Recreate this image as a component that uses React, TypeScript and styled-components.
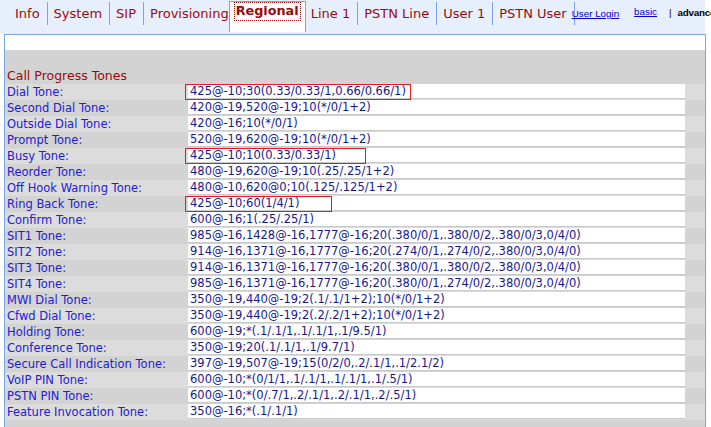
import React from "react";
import styled, { createGlobalStyle } from "styled-components";

const GlobalStyle = createGlobalStyle`
    html, body {
        margin: 0;
        padding: 0;
        background: #ffffff;
        overflow: hidden;
    }
    body {
        font-family: "DejaVu Sans", Verdana, sans-serif;
    }
`;

const Page = styled.div`
    width: 711px;
    height: 427px;
    overflow: hidden;
`;

const TopBar = styled.div`
    width: 705px;
    height: 34px;
    background: #e8effc;
    display: flex;
    align-items: flex-start;
    padding-left: 9px;
    box-sizing: border-box;
    white-space: nowrap;
`;

const TabList = styled.nav`
    display: flex;
    align-items: flex-start;
    padding-top: 2px;
`;

const Tab = styled.div<{ $first?: boolean; $afterActive?: boolean }>`
    height: 23px;
    line-height: 24px;
    padding: 0 7px 0 6px;
    font-size: 13px;
    color: #9c0a0a;
    border-left: ${(p) => (p.$first || p.$afterActive ? "none" : "1px solid #7ba4e8")};
    ${(p) => p.$afterActive && "padding-left: 5px;"}
`;

const ActiveTab = styled.div`
    margin: -1px 0 0 -7px;
    height: 29px;
    padding: 1px 5px 0 5px;
    background: #ffffff;
    border: 1px solid #7ba4e8;
    border-bottom: none;
    font-size: 12.8px;
    font-weight: bold;
    color: #9c0a0a;
`;

const FocusLabel = styled.span`
    display: inline-block;
    line-height: 16px;
    padding: 0 1px 1px 1px;
    outline: 1px dotted #9c0a0a;
`;

const LoginLink = styled.div`
    border-left: 1px solid #7ba4e8;
    height: 23px;
`;

const SmallLink = styled.a`
    font-family: "Liberation Sans", Arial, sans-serif;
    font-size: 9.8px;
    color: #0000d0;
    text-decoration: underline;
    line-height: 20px;
    display: inline-block;
`;

const LoginText = styled(SmallLink)`
    margin-left: -3px;
`;

const Modes = styled.div`
    display: flex;
    align-items: center;
    height: 20px;
    margin: 2px 0 0 15px;
    font-family: "Liberation Sans", Arial, sans-serif;
    font-size: 9.8px;
    color: #000000;
`;

const Divider = styled.span`
    margin: 0 6px 0 12px;
`;

const ModeCurrent = styled.span`
    font-weight: bold;
    letter-spacing: -0.2px;
`;

const Panel = styled.section`
    margin-left: 4px;
    width: 702px;
    box-sizing: border-box;
    border: 1px solid #7ba4e8;
    border-bottom: none;
`;

const WhiteStrip = styled.div`
    height: 15px;
    background: #ffffff;
`;

const Body = styled.div`
    background: #d3d3d3;
    padding-bottom: 12px;
`;

const SectionTitle = styled.h2`
    margin: 0;
    padding: 17px 0 0 2px;
    height: 17px;
    line-height: 17px;
    font-size: 12.5px;
    font-weight: normal;
    color: #9c0a0a;
`;

const Row = styled.div<{ $alt: boolean }>`
    display: grid;
    grid-template-columns: 180px 500px 20px;
    height: 16px;
    background: ${(p) => (p.$alt ? "#d3d3d3" : "#dcdcdc")};
`;

const Label = styled.div`
    padding-left: 2px;
    line-height: 16px;
    font-size: 11.5px;
    color: #2020d6;
    white-space: nowrap;
`;

const ValueCell = styled.div`
    position: relative;
    padding-left: 3px;
`;

const Field = styled.div`
    height: 15px;
    background: #ffffff;
    border-bottom: 1px solid #c9c9c9;
    box-sizing: border-box;
    padding-left: 2px;
    line-height: 15px;
    font-size: 11.5px;
    color: #17178c;
    white-space: nowrap;
`;

const Mark = styled.span`
    position: absolute;
    left: 0;
    top: 0;
    height: 16px;
    box-sizing: border-box;
    border: 1px solid #e01e1e;
    pointer-events: none;
`;

const Filler = styled.div``;

type Tone = { label: string; value: string; mark?: number };

const tones: Tone[] = [
    { label: "Dial Tone:", value: "425@-10;30(0.33/0.33/1,0.66/0.66/1)", mark: 226 },
    { label: "Second Dial Tone:", value: "420@-19,520@-19;10(*/0/1+2)" },
    { label: "Outside Dial Tone:", value: "420@-16;10(*/0/1)" },
    { label: "Prompt Tone:", value: "520@-19,620@-19;10(*/0/1+2)" },
    { label: "Busy Tone:", value: "425@-10;10(0.33/0.33/1)", mark: 181 },
    { label: "Reorder Tone:", value: "480@-19,620@-19;10(.25/.25/1+2)" },
    { label: "Off Hook Warning Tone:", value: "480@-10,620@0;10(.125/.125/1+2)" },
    { label: "Ring Back Tone:", value: "425@-10;60(1/4/1)", mark: 147 },
    { label: "Confirm Tone:", value: "600@-16;1(.25/.25/1)" },
    { label: "SIT1 Tone:", value: "985@-16,1428@-16,1777@-16;20(.380/0/1,.380/0/2,.380/0/3,0/4/0)" },
    { label: "SIT2 Tone:", value: "914@-16,1371@-16,1777@-16;20(.274/0/1,.274/0/2,.380/0/3,0/4/0)" },
    { label: "SIT3 Tone:", value: "914@-16,1371@-16,1777@-16;20(.380/0/1,.380/0/2,.380/0/3,0/4/0)" },
    { label: "SIT4 Tone:", value: "985@-16,1371@-16,1777@-16;20(.380/0/1,.274/0/2,.380/0/3,0/4/0)" },
    { label: "MWI Dial Tone:", value: "350@-19,440@-19;2(.1/.1/1+2);10(*/0/1+2)" },
    { label: "Cfwd Dial Tone:", value: "350@-19,440@-19;2(.2/.2/1+2);10(*/0/1+2)" },
    { label: "Holding Tone:", value: "600@-19;*(.1/.1/1,.1/.1/1,.1/9.5/1)" },
    { label: "Conference Tone:", value: "350@-19;20(.1/.1/1,.1/9.7/1)" },
    { label: "Secure Call Indication Tone:", value: "397@-19,507@-19;15(0/2/0,.2/.1/1,.1/2.1/2)" },
    { label: "VoIP PIN Tone:", value: "600@-10;*(0/1/1,.1/.1/1,.1/.1/1,.1/.5/1)" },
    { label: "PSTN PIN Tone:", value: "600@-10;*(0/.7/1,.2/.1/1,.2/.1/1,.2/.5/1)" },
    { label: "Feature Invocation Tone:", value: "350@-16;*(.1/.1/1)" },
];

const tabs = ["Info", "System", "SIP", "Provisioning", "Regional", "Line 1", "PSTN Line", "User 1", "PSTN User"];
const active = "Regional";

const App = () => {
    return (
        <Page>
            <GlobalStyle />
            <TopBar>
                <TabList>
                    {tabs.map((t, i) =>
                        t === active ? (
                            <ActiveTab key={t}>
                                <FocusLabel>{t}</FocusLabel>
                            </ActiveTab>
                        ) : (
                            <Tab key={t} $first={i === 0} $afterActive={tabs[i - 1] === active}>
                                {t}
                            </Tab>
                        )
                    )}
                    <LoginLink>
                        <LoginText href="#">User Login</LoginText>
                    </LoginLink>
                </TabList>
                <Modes>
                    <SmallLink href="#">basic</SmallLink>
                    <Divider>|</Divider>
                    <ModeCurrent>advanced</ModeCurrent>
                </Modes>
            </TopBar>
            <Panel>
                <WhiteStrip />
                <Body>
                    <SectionTitle>Call Progress Tones</SectionTitle>
                    {tones.map((t, i) => (
                        <Row key={t.label} $alt={i % 2 === 1}>
                            <Label>{t.label}</Label>
                            <ValueCell>
                                <Field>{t.value}</Field>
                                {t.mark && <Mark style={{ width: t.mark }} />}
                            </ValueCell>
                            <Filler />
                        </Row>
                    ))}
                </Body>
            </Panel>
        </Page>
    );
};

export default App;
